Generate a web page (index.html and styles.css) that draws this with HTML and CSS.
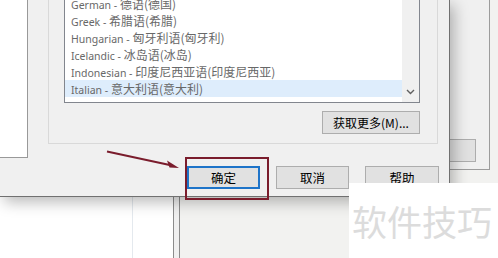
FILE: index.html
```html
<!DOCTYPE html>
<html>
<head>
<meta charset="utf-8">
<link rel="stylesheet" href="styles.css">
</head>
<body>
<div class="desk">
  <div class="under">
    <div class="under-line"></div>
  </div>
  <div class="under2"></div>
  <div class="backwin">
    <div class="btn backbtn"></div>
  </div>

  <div class="dialog">
    <div class="top">
      <div class="leftpane"></div>
      <div class="group">
        <div class="listbox">
          <div class="items">
            <div class="row">German - <span class="zh">德语(德国)</span></div>
            <div class="row">Greek - <span class="zh">希腊语(希腊)</span></div>
            <div class="row">Hungarian - <span class="zh">匈牙利语(匈牙利)</span></div>
            <div class="row">Icelandic - <span class="zh">冰岛语(冰岛)</span></div>
            <div class="row">Indonesian - <span class="zh">印度尼西亚语(印度尼西亚)</span></div>
            <div class="row sel">Italian - <span class="zh">意大利语(意大利)</span></div>
          </div>
          <div class="scroll">
            <svg class="chev" width="9" height="6" viewBox="0 0 9 6"><path d="M1 1 L4.5 4.5 L8 1" fill="none" stroke="#606060" stroke-width="1.4"/></svg>
          </div>
        </div>
        <div class="morerow">
          <div class="btn more">获取更多(M)...</div>
        </div>
      </div>
    </div>
    <div class="buttons">
      <div class="btn ok">确定</div>
      <div class="btn cancel">取消</div>
      <div class="btn help">帮助</div>
    </div>
  </div>

  <div class="highlight"></div>
  <svg class="arrow" width="498" height="258" viewBox="0 0 498 258">
    <line x1="107" y1="151.5" x2="172" y2="165.5" stroke="#7a1c2c" stroke-width="2"/>
    <path d="M179 168 L167 160.5 L169.5 167.5 Z" fill="#7a1c2c"/>
  </svg>

  <div class="watermark">软件技巧</div>
</div>
</body>
</html>
```

FILE: styles.css
```css
* { box-sizing: border-box; }
html, body { margin: 0; padding: 0; }
body { width: 498px; height: 258px; overflow: hidden; background: #efefec; }

.desk {
  position: relative;
  width: 498px;
  height: 258px;
  overflow: hidden;
  background: #f2f2f0;
  font-family: "Noto Sans", "Noto Sans CJK SC", sans-serif;
}

.under {
  position: absolute;
  left: 0;
  top: 150px;
  width: 174px;
  height: 120px;
  background: #ffffff;
  border-right: 1px solid #8c8c8c;
}
.under-line {
  margin-left: 132px;
  width: 1px;
  height: 100%;
  background: #e4e9ee;
}
.under2 {
  position: absolute;
  left: 174px;
  top: 150px;
  width: 6px;
  height: 120px;
  background: #f0f0f0;
  border-right: 1px solid #8c8c8c;
}

.backwin {
  position: absolute;
  left: 300px;
  top: -5px;
  width: 190px;
  height: 175px;
  background: #f0f0f0;
  border-right: 1px solid #9c9c9c;
  border-bottom: 1px solid #9c9c9c;
  display: flex;
  justify-content: flex-end;
  align-items: flex-end;
  padding: 0 13px 7px 0;
}
.backbtn { width: 80px; height: 24px; }

.dialog {
  position: absolute;
  left: 0;
  top: 0;
  width: 450px;
  height: 197px;
  background: #f0f0f0;
  border-right: 1px solid #707070;
  border-bottom: 1px solid #707070;
  box-shadow: 4px 5px 14px rgba(0,0,0,0.28);
  display: flex;
  flex-direction: column;
}

.top { display: flex; align-items: flex-start; }
.leftpane {
  width: 28px;
  height: 158px;
  background: #fff;
  border-right: 1px solid #999;
  border-bottom: 1px solid #999;
}
.group {
  margin-left: 20px;
  width: 390px;
  height: 144px;
  border: 1px solid #d9d9d9;
  border-top: none;
  padding-left: 15px;
}
.listbox {
  width: 356px;
  height: 103px;
  border: 1px solid #82868e;
  border-top: none;
  background: #fff;
  display: flex;
  overflow: hidden;
}
.items {
  width: 337px;
  margin-top: -5px;
  display: flex;
  flex-direction: column;
}
.row {
  height: 17px;
  line-height: 17px;
  padding-left: 6px;
  font-size: 10.5px;
  color: #686868;
  white-space: nowrap;
  flex: none;
  overflow: hidden;
}
.row .zh {
  font-family: "Noto Sans CJK SC", sans-serif;
  font-size: 12px;
  line-height: 17px;
}
.row.sel { background: #deedfc; }
.scroll {
  width: 17px;
  background: #f0f0f0;
  display: flex;
  align-items: flex-end;
  justify-content: center;
  padding-bottom: 7px;
}
.morerow {
  width: 356px;
  margin-top: 8px;
  display: flex;
  justify-content: flex-end;
}

.btn {
  background: #e1e1e1;
  border: 1px solid #adadad;
  height: 23px;
  display: flex;
  align-items: center;
  justify-content: center;
  font-family: "Noto Sans CJK SC", sans-serif;
  font-size: 12.5px;
  color: #000;
  white-space: nowrap;
}
.more { width: 98px; font-size: 12px; }

.buttons {
  display: flex;
  gap: 16px;
  margin-top: 8px;
  padding-left: 187px;
}
.ok { width: 73px; border: 2px solid #1e74c9; }
.cancel { width: 73px; }
.help { width: 74px; }

.highlight {
  position: absolute;
  left: 185px;
  top: 157px;
  width: 84px;
  height: 43px;
  border: 2px solid #7a1c2c;
}
.arrow { position: absolute; left: 0; top: 0; }

.watermark {
  position: absolute;
  left: 349px;
  top: 183px;
  width: 149px;
  height: 75px;
  background: #fff;
  font-family: "Noto Sans CJK SC", sans-serif;
  font-size: 35px;
  color: #dcdcdc;
  line-height: 75px;
  padding-left: 3px;
  white-space: nowrap;
}
```
